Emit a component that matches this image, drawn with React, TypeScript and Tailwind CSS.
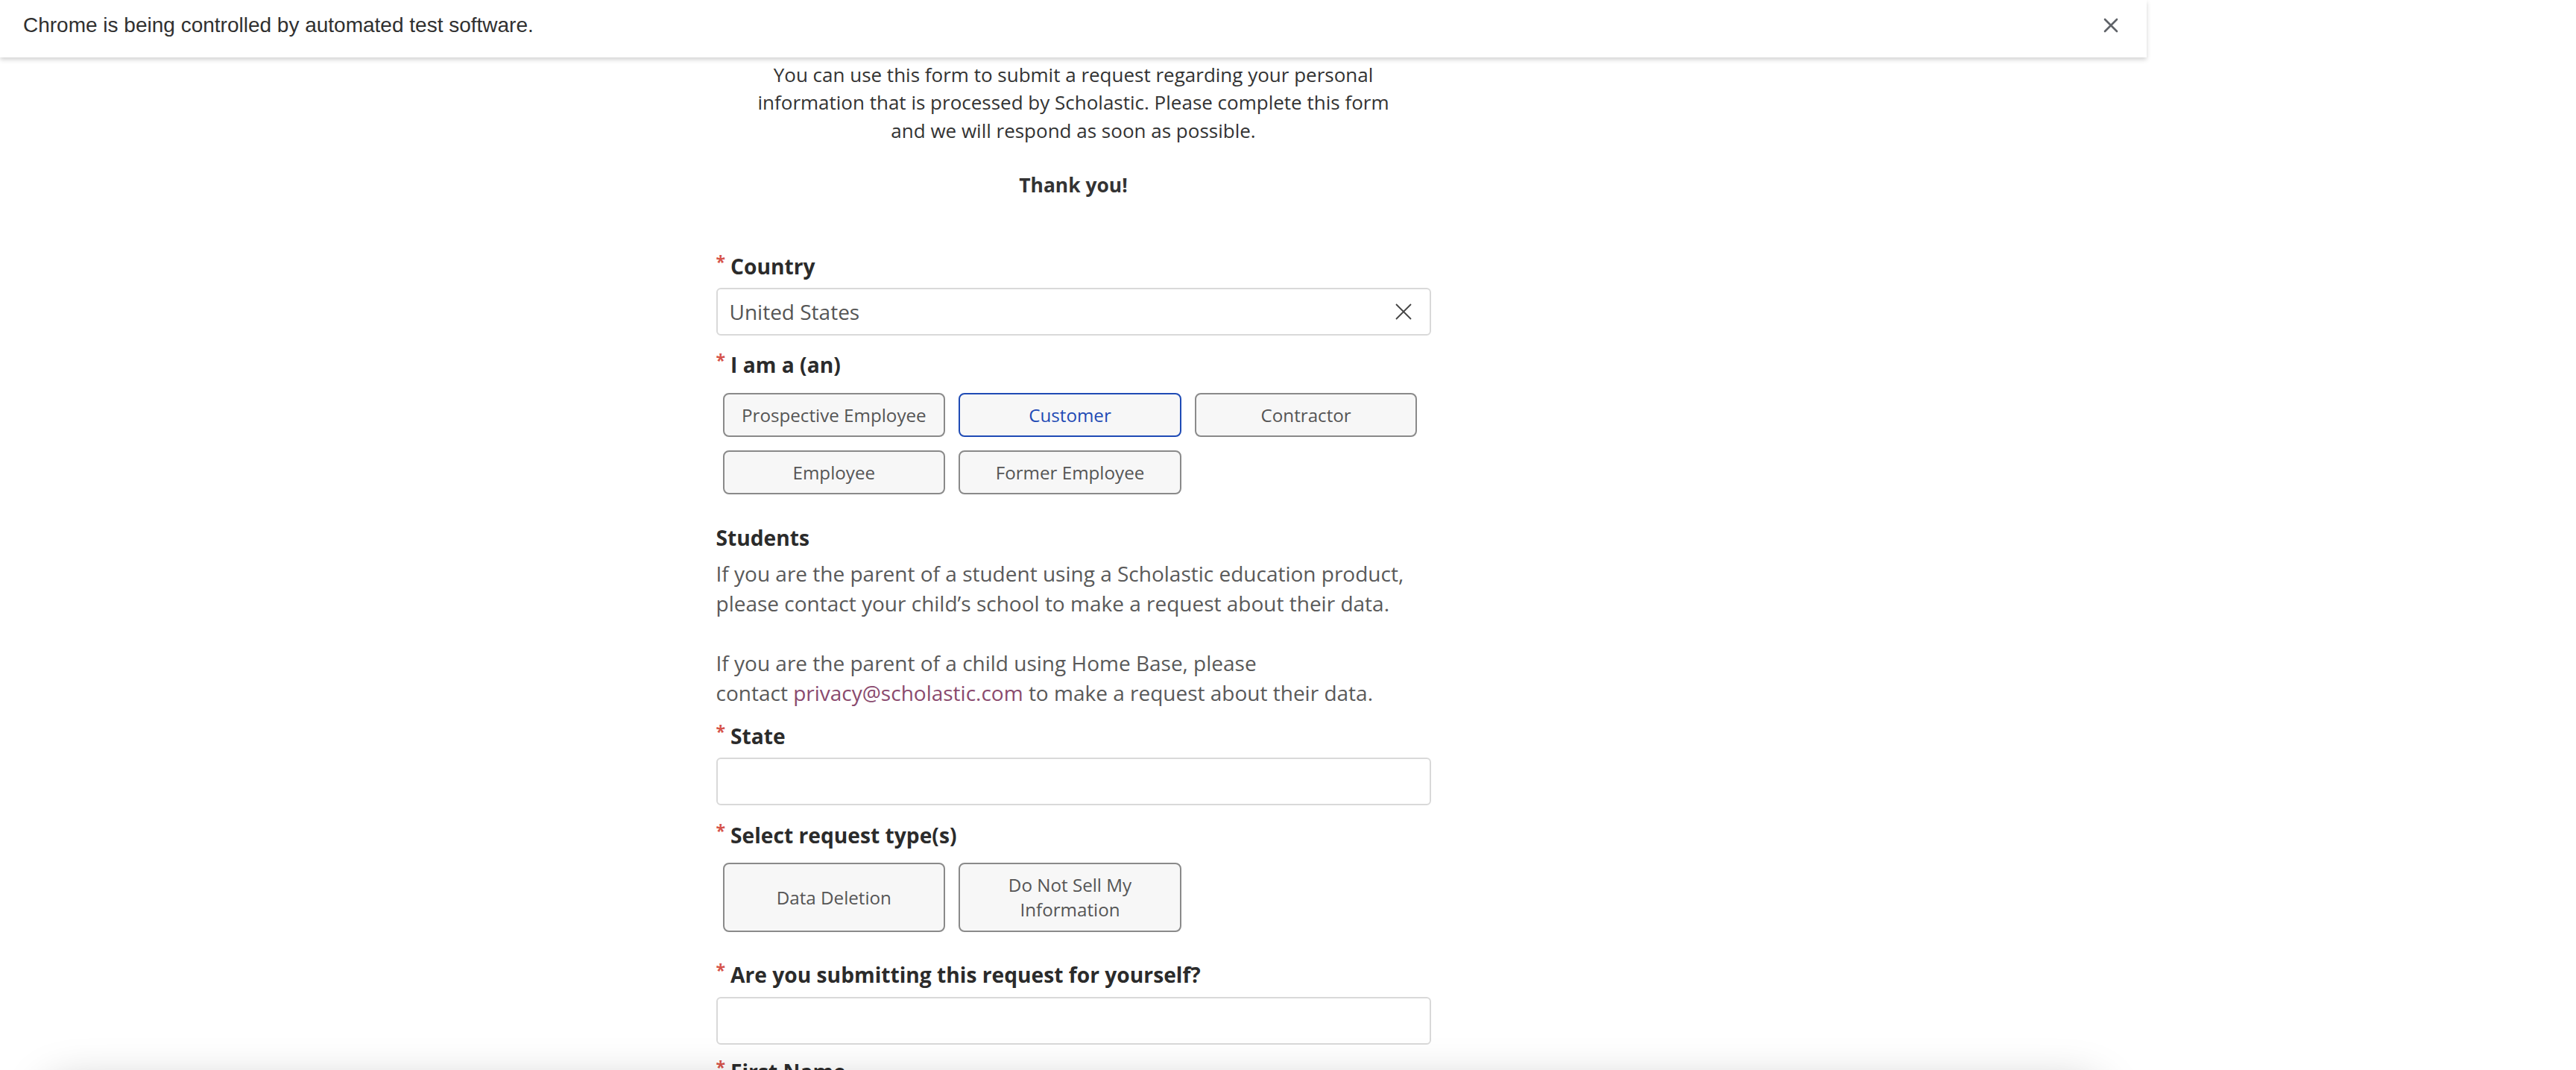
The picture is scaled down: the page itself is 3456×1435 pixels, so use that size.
import React from "react";

function Star() {
  return <span className="mr-[7px] mt-[3px] text-[23px] leading-[22px] text-[#d6544b]">*</span>;
}

function Label({ children, required = true }: { children: React.ReactNode; required?: boolean }) {
  return (
    <div className="flex items-start text-[28.2px] leading-[40px] font-bold text-[#2b2b2b]">
      {required && <Star />}
      <span>{children}</span>
    </div>
  );
}

function Choice({ children, selected = false, tall = false }: { children: React.ReactNode; selected?: boolean; tall?: boolean }) {
  return (
    <div
      className={`flex items-center justify-center rounded-[8px] border-2 bg-[#f7f7f7] text-center text-[24.2px] leading-[33px] ${
        tall ? "h-[93px]" : "h-[59px]"
      } ${selected ? "border-[#1f4bb5] text-[#1f4bb5]" : "border-[#8a8a8a] text-[#555555]"}`}
    >
      {children}
    </div>
  );
}

function Field({ children }: { children?: React.ReactNode }) {
  return (
    <div className="flex h-[64px] items-center justify-between rounded-[6px] border-2 border-[#d9d9d9] bg-white pl-[16px] pr-[22px] text-[28px] text-[#555555]">
      {children}
    </div>
  );
}

export default function App() {
  return (
    <div className="relative h-[1435px] w-[3456px] overflow-hidden bg-white" style={{ fontFamily: '"Open Sans", "Noto Sans", sans-serif' }}>
      <div className="w-[2880px]">
        {/* automation infobar */}
        <div className="relative z-10 flex h-[77px] items-center justify-between bg-white pb-[9px] pl-[31px] pr-[40px] shadow-[0_3px_6px_rgba(0,0,0,0.18)]">
          <span className="text-[28px] text-[#303030]" style={{ fontFamily: '"Liberation Sans", Arial, sans-serif' }}>
            Chrome is being controlled by automated test software.
          </span>
          <svg width="20" height="20" viewBox="0 0 20 20" className="mr-[-2px]">
            <path d="M2 2 L18 18 M18 2 L2 18" stroke="#5f6368" strokeWidth="2.6" strokeLinecap="round" />
          </svg>
        </div>

        <div className="mx-auto w-[959px]">
          <p className="mt-[5px] text-center text-[26px] leading-[37.4px] text-[#333333]">
            You can use this form to submit a request regarding your personal
            <br />
            information that is processed by Scholastic. Please complete this form
            <br />
            and we will respond as soon as possible.
          </p>
          <p className="mt-[36px] text-center text-[26.4px] font-bold leading-[37.4px] text-[#333333]">Thank you!</p>

          <div className="mt-[69px]">
            <Label>Country</Label>
          </div>
          <div className="mt-[9px]">
            <Field>
              <span>United States</span>
              <svg width="26" height="26" viewBox="0 0 26 26">
                <path d="M3 3 L23 23 M23 3 L3 23" stroke="#444444" strokeWidth="1.8" />
              </svg>
            </Field>
          </div>

          <div className="mt-[19px]">
            <Label>I am a (an)</Label>
          </div>
          <div className="ml-[9px] mt-[18px] grid w-[932px] grid-cols-3 gap-[18px]">
            <Choice>Prospective Employee</Choice>
            <Choice selected>Customer</Choice>
            <Choice>Contractor</Choice>
            <Choice>Employee</Choice>
            <Choice>Former Employee</Choice>
          </div>

          <div className="mt-[38px]">
            <Label required={false}>Students</Label>
          </div>
          <p className="mt-[8px] text-[28px] leading-[40px] text-[#595959]">
            If you are the parent of a student using a Scholastic education product,
            <br />
            please contact your child’s school to make a request about their data.
            <br />
            <br />
            If you are the parent of a child using Home Base, please
            <br />
            contact <span className="text-[#8a4a6e]">privacy@scholastic.com</span> to make a request about their data.
          </p>

          <div className="mt-[18px]">
            <Label>State</Label>
          </div>
          <div className="mt-[9px]">
            <Field />
          </div>

          <div className="mt-[20px]">
            <Label>Select request type(s)</Label>
          </div>
          <div className="ml-[9px] mt-[17px] grid w-[932px] grid-cols-3 gap-[18px]">
            <Choice tall>Data Deletion</Choice>
            <Choice tall>
              Do Not Sell My
              <br />
              Information
            </Choice>
          </div>

          <div className="mt-[37px]">
            <Label>Are you submitting this request for yourself?</Label>
          </div>
          <div className="mt-[10px]">
            <Field />
          </div>

          <div className="mt-[16px]">
            <Label>First Name</Label>
          </div>
        </div>
      </div>

      {/* shadow of the banner sitting just below the fold */}
      <div className="absolute left-[60px] top-[1452px] h-[200px] w-[2760px] rounded-[30px] bg-white shadow-[0_0_60px_rgba(0,0,0,0.22)]" />
    </div>
  );
}
